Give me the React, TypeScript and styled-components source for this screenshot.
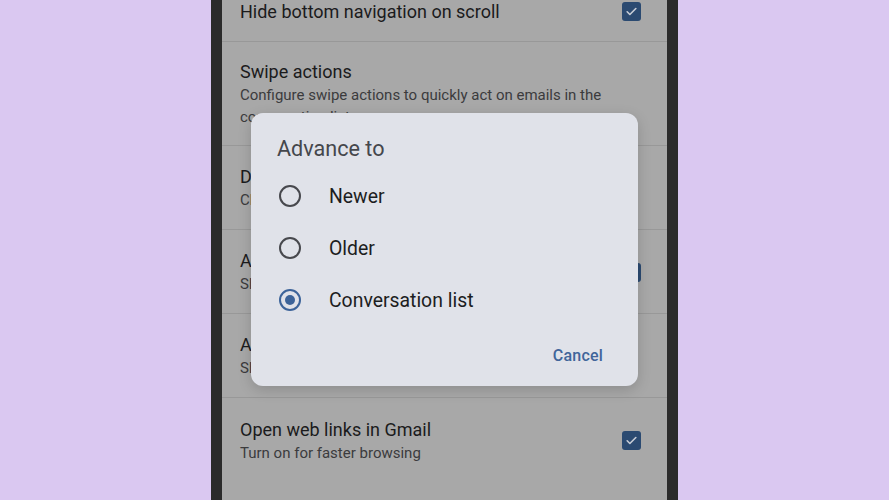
import { createGlobalStyle, styled } from 'styled-components';

const GlobalStyle = createGlobalStyle`
  html, body {
    margin: 0;
    padding: 0;
    height: 100%;
    overflow: hidden;
  }
  body {
    background: #dac8f1;
    font-family: Roboto, "Noto Sans", "Liberation Sans", sans-serif;
  }
`;

const Stage = styled.div`
  width: 889px;
  height: 500px;
  display: flex;
  justify-content: center;
`;

const Phone = styled.div`
  width: 467px;
  height: 500px;
  background: #2b2b2b;
  padding: 0 11px;
  box-sizing: border-box;
  display: flex;
`;

const Screen = styled.div`
  position: relative;
  flex: 1;
  background: #a8a8a8;
  overflow: hidden;
`;

const SettingsList = styled.ul`
  list-style: none;
  margin: 0;
  padding: 0;
`;

const Row = styled.li<{ $partial?: boolean }>`
  display: flex;
  align-items: center;
  gap: 16px;
  padding: ${(p) => (p.$partial ? '0 26px 18px 18px' : '18px 26px 17px 18px')};
  border-bottom: 1px solid #989898;
  box-sizing: border-box;
  min-height: ${(p) => (p.$partial ? '42px' : '84px')};

  &:last-child {
    border-bottom: none;
  }
`;

const RowText = styled.div`
  flex: 1;
  display: flex;
  flex-direction: column;
`;

const RowTitle = styled.div<{ $tight?: boolean }>`
  font-size: 18px;
  line-height: ${(p) => (p.$tight ? '22px' : '24px')};
  color: #1b1b1c;
`;

const RowSubtitle = styled.div`
  font-size: 15px;
  line-height: 22px;
  color: #3b3b3d;
  padding-right: 30px;
`;

const CheckBox = styled.div`
  width: 19px;
  height: 19px;
  border-radius: 3px;
  background: #2b4a71;
  display: flex;
  align-items: center;
  justify-content: center;
  flex-shrink: 0;
`;

const Dialog = styled.div`
  position: absolute;
  left: 29px;
  top: 113px;
  width: 387px;
  height: 273px;
  box-sizing: border-box;
  background: #e0e2e9;
  border-radius: 12px;
  box-shadow: 0 4px 14px rgba(0, 0, 0, 0.16);
  padding-top: 22px;
  display: flex;
  flex-direction: column;
`;

const DialogTitle = styled.div`
  font-size: 21.6px;
  line-height: 28px;
  color: #45474c;
  padding-left: 26px;
  margin-bottom: 7px;
`;

const Options = styled.div`
  display: flex;
  flex-direction: column;
`;

const Option = styled.label`
  height: 52px;
  display: flex;
  align-items: center;
  gap: 28px;
  padding-left: 28px;
  font-size: 19.4px;
  color: #1c1d21;
`;

const Footer = styled.div`
  display: flex;
  justify-content: flex-end;
  margin-top: 20px;
  padding: 0 35px 20px 0;
`;

const TextButton = styled.button`
  border: none;
  background: none;
  padding: 0;
  font-family: inherit;
  font-size: 16px;
  font-weight: 500;
  line-height: 20px;
  letter-spacing: 0.2px;
  color: #41659a;
`;

const Check = () => (
  <CheckBox>
    <svg width="13" height="13" viewBox="0 0 24 24">
      <path d="M4 12.5l5 5L20 6.5" fill="none" stroke="#c8cdd6" strokeWidth="3" strokeLinecap="round" strokeLinejoin="round" />
    </svg>
  </CheckBox>
);

const Radio = ({ checked }: { checked?: boolean }) => (
  <svg width="22" height="22" viewBox="0 0 22 22">
    <circle cx="11" cy="11" r="10" fill="none" stroke={checked ? '#3c6399' : '#47484d'} strokeWidth="2" />
    {checked && <circle cx="11" cy="11" r="5" fill="#3c6399" />}
  </svg>
);

const settings = [
  { title: 'Default reply action', subtitle: 'Choose your default reply setting', checked: false },
  { title: 'Auto-fit messages', subtitle: 'Shrink messages to fit the screen', checked: true },
  { title: 'Auto-advance', subtitle: 'Show conversation list after you archive or delete', checked: false },
  { title: 'Open web links in Gmail', subtitle: 'Turn on for faster browsing', checked: true },
];

const options = [
  { label: 'Newer', checked: false },
  { label: 'Older', checked: false },
  { label: 'Conversation list', checked: true },
];

export default function App() {
  return (
    <>
      <GlobalStyle />
      <Stage>
        <Phone>
          <Screen>
            <SettingsList>
              <Row $partial>
                <RowText>
                  <RowTitle $tight>Hide bottom navigation on scroll</RowTitle>
                </RowText>
                <Check />
              </Row>
              <Row>
                <RowText>
                  <RowTitle>Swipe actions</RowTitle>
                  <RowSubtitle>Configure swipe actions to quickly act on emails in the conversation list</RowSubtitle>
                </RowText>
              </Row>
              {settings.map((s) => (
                <Row key={s.title}>
                  <RowText>
                    <RowTitle>{s.title}</RowTitle>
                    <RowSubtitle>{s.subtitle}</RowSubtitle>
                  </RowText>
                  {s.checked && <Check />}
                </Row>
              ))}
            </SettingsList>
            <Dialog>
              <DialogTitle>Advance to</DialogTitle>
              <Options>
                {options.map((o) => (
                  <Option key={o.label}>
                    <Radio checked={o.checked} />
                    <span>{o.label}</span>
                  </Option>
                ))}
              </Options>
              <Footer>
                <TextButton>Cancel</TextButton>
              </Footer>
            </Dialog>
          </Screen>
        </Phone>
      </Stage>
    </>
  );
}
